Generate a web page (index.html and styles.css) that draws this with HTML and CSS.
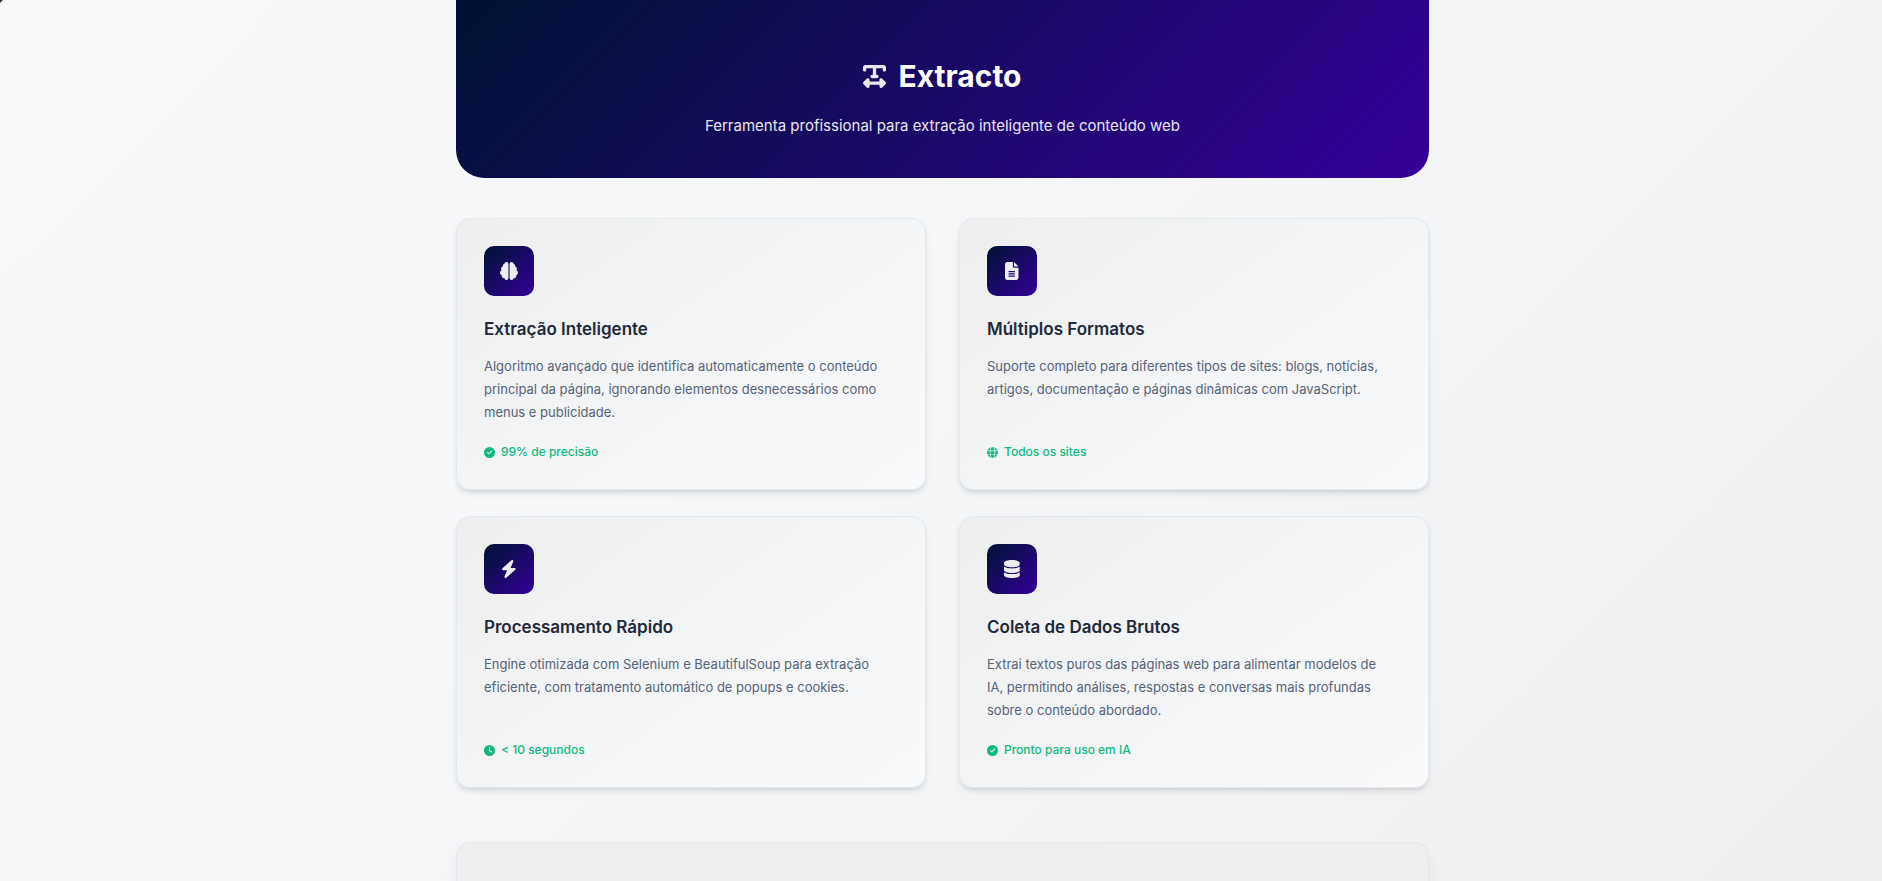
FILE: index.html
```html
<!DOCTYPE html>
<html lang="pt-BR">
<head>
<meta charset="utf-8">
<meta name="viewport" content="width=device-width, initial-scale=1">
<title>Extracto</title>
<link rel="stylesheet" href="styles.css">
</head>
<body>
<div class="page">
  <header class="hero">
    <h1 class="hero-title">
      <svg class="hero-icon" viewBox="0 32 448 448" aria-hidden="true"><path d="M64 128V96H192l0 128H176c-17.700 0-32 14.300-32 32s14.300 32 32 32h96c17.700 0 32-14.300 32-32s-14.300-32-32-32H256l0-128H384v32c0 17.700 14.300 32 32 32s32-14.300 32-32V80c0-26.500-21.500-48-48-48H224 48C21.500 32 0 53.500 0 80v48c0 17.700 14.300 32 32 32s32-14.300 32-32zM9.400 361.400c-12.500 12.500-12.500 32.800 0 45.300l64 64c9.200 9.200 22.900 11.900 34.900 6.900s19.800-16.600 19.800-29.600V416H320v32c0 12.900 7.800 24.600 19.800 29.600s25.700 2.200 34.900-6.900l64-64c12.500-12.500 12.500-32.800 0-45.300l-64-64c-9.200-9.200-22.900-11.900-34.900-6.900s-19.800 16.600-19.800 29.600v32H128V320c0-12.900-7.800-24.600-19.800-29.600s-25.700-2.200-34.900 6.900l-64 64z"/></svg>
      <span>Extracto</span>
    </h1>
    <p class="hero-subtitle">Ferramenta profissional para extração inteligente de conteúdo web</p>
  </header>

  <main class="content">
    <div class="features">
      <article class="card">
        <div class="card-icon"><svg viewBox="0 0 512 512" aria-hidden="true"><path d="M184 0c30.900 0 56 25.100 56 56V456c0 30.900-25.100 56-56 56c-28.900 0-52.700-21.900-55.700-50.100c-5.200 1.400-10.700 2.100-16.300 2.100c-35.300 0-64-28.700-64-64c0-7.400 1.300-14.600 3.600-21.200C21.400 367.400 0 338.200 0 304c0-31.900 18.700-59.500 45.800-72.300C37.100 220.800 32 207 32 192c0-30.700 21.600-56.300 50.400-62.600C80.800 123.900 80 118 80 112c0-29.900 20.600-55.100 48.300-62.100C131.300 21.900 155.100 0 184 0zM328 0c28.900 0 52.600 21.900 55.700 49.900c27.800 7 48.300 32.100 48.300 62.100c0 6-.8 11.900-2.400 17.400c28.800 6.200 50.400 31.900 50.400 62.600c0 15-5.100 28.800-13.800 39.700C493.300 244.500 512 272.100 512 304c0 34.200-21.400 63.400-51.600 74.800c2.300 6.600 3.600 13.800 3.600 21.200c0 35.300-28.700 64-64 64c-5.600 0-11.100-.7-16.300-2.100c-3 28.200-26.800 50.100-55.700 50.100c-30.900 0-56-25.100-56-56V56c0-30.900 25.100-56 56-56z"/></svg></div>
        <h2 class="card-title">Extração Inteligente</h2>
        <p class="card-text">Algoritmo avançado que identifica automaticamente o conteúdo principal da página, ignorando elementos desnecessários como menus e publicidade.</p>
        <p class="card-stat"><svg viewBox="0 0 512 512" aria-hidden="true"><path d="M256 512A256 256 0 1 0 256 0a256 256 0 1 0 0 512zM369 209L241 337c-9.400 9.400-24.600 9.400-33.900 0l-64-64c-9.400-9.400-9.400-24.600 0-33.900s24.600-9.400 33.900 0l47 47L335 175c9.400-9.400 24.600-9.400 33.900 0s9.400 24.600 0 33.900z"/></svg>99% de precisão</p>
      </article>

      <article class="card">
        <div class="card-icon"><svg viewBox="0 0 384 512" aria-hidden="true"><path d="M64 0C28.700 0 0 28.700 0 64V448c0 35.300 28.700 64 64 64H320c35.300 0 64-28.700 64-64V160H256c-17.700 0-32-14.300-32-32V0H64zM256 0V128H384L256 0zM112 256H272c8.800 0 16 7.200 16 16s-7.200 16-16 16H112c-8.800 0-16-7.200-16-16s7.200-16 16-16zm0 64H272c8.800 0 16 7.200 16 16s-7.200 16-16 16H112c-8.800 0-16-7.200-16-16s7.200-16 16-16zm0 64H272c8.800 0 16 7.200 16 16s-7.200 16-16 16H112c-8.800 0-16-7.200-16-16s7.200-16 16-16z"/></svg></div>
        <h2 class="card-title">Múltiplos Formatos</h2>
        <p class="card-text">Suporte completo para diferentes tipos de sites: blogs, notícias, artigos, documentação e páginas dinâmicas com JavaScript.</p>
        <p class="card-stat"><svg viewBox="0 0 512 512" aria-hidden="true"><path d="M352 256c0 22.200-1.200 43.600-3.300 64H163.300c-2.200-20.400-3.300-41.800-3.300-64s1.200-43.600 3.300-64H348.700c2.200 20.400 3.300 41.800 3.300 64zm28.800-64H503.900c5.300 20.500 8.100 41.900 8.100 64s-2.800 43.500-8.100 64H380.800c2.100-20.600 3.200-42 3.200-64s-1.100-43.400-3.200-64zm112.600-32H376.700c-10-63.900-29.800-117.400-55.300-151.600c78.300 20.700 142 77.500 171.900 151.600zm-149.100 0H167.700c6.100-36.400 15.500-68.600 27-94.700c10.500-23.600 22.200-40.700 33.500-51.500C239.400 3.200 248.700 0 256 0s16.600 3.200 27.800 13.800c11.300 10.800 23 27.900 33.500 51.500c11.600 26 20.900 58.200 27 94.700zm-209 0H18.600C48.600 85.900 112.200 29.100 190.600 8.400C165.100 42.600 145.300 96.100 135.300 160zM8.100 192H131.200c-2.100 20.600-3.200 42-3.200 64s1.100 43.400 3.200 64H8.100C2.800 299.500 0 278.100 0 256s2.800-43.500 8.100-64zM194.700 446.600c-11.600-26-20.900-58.200-27-94.600H344.300c-6.100 36.400-15.500 68.600-27 94.600c-10.500 23.600-22.200 40.700-33.500 51.500C272.600 508.800 263.300 512 256 512s-16.600-3.200-27.800-13.800c-11.300-10.800-23-27.900-33.500-51.500zM135.300 352c10 63.900 29.800 117.400 55.300 151.600C112.200 482.900 48.600 426.100 18.600 352H135.300zm358.100 0c-30 74.100-93.600 130.900-171.900 151.600c25.500-34.200 45.200-87.700 55.300-151.600H493.400z"/></svg>Todos os sites</p>
      </article>

      <article class="card">
        <div class="card-icon"><svg viewBox="0 0 448 512" aria-hidden="true"><path d="M349.400 44.600c5.900-13.700 1.500-29.700-10.600-38.500s-28.600-8-39.900 1.800l-256 224c-10 8.800-13.600 22.900-8.900 35.300S50.700 288 64 288H175.500L98.600 467.400c-5.900 13.700-1.500 29.700 10.600 38.500s28.600 8 39.900-1.800l256-224c10-8.800 13.600-22.900 8.900-35.300s-16.600-20.700-30-20.700H272.500L349.400 44.600z"/></svg></div>
        <h2 class="card-title">Processamento Rápido</h2>
        <p class="card-text">Engine otimizada com Selenium e BeautifulSoup para extração eficiente, com tratamento automático de popups e cookies.</p>
        <p class="card-stat"><svg viewBox="0 0 512 512" aria-hidden="true"><path d="M256 0a256 256 0 1 1 0 512A256 256 0 1 1 256 0zM232 120V256c0 8 4 15.500 10.700 20l96 64c11 7.400 25.900 4.400 33.300-6.700s4.400-25.900-6.700-33.300L280 243.200V120c0-13.300-10.700-24-24-24s-24 10.700-24 24z"/></svg>&lt; 10 segundos</p>
      </article>

      <article class="card">
        <div class="card-icon"><svg viewBox="0 0 448 512" aria-hidden="true"><path d="M448 80v48c0 44.200-100.300 80-224 80S0 172.200 0 128V80C0 35.800 100.300 0 224 0S448 35.800 448 80zM393.200 214.700c20.800-7.400 39.900-16.900 54.800-28.600V288c0 44.200-100.300 80-224 80S0 332.200 0 288V186.100c14.900 11.800 34 21.200 54.800 28.600C99.700 230.700 159.500 240 224 240s124.300-9.300 169.200-25.300zM0 346.100c14.900 11.800 34 21.200 54.800 28.600C99.700 390.700 159.500 400 224 400s124.300-9.300 169.200-25.300c20.800-7.400 39.900-16.900 54.800-28.600V432c0 44.200-100.300 80-224 80S0 476.200 0 432V346.100z"/></svg></div>
        <h2 class="card-title">Coleta de Dados Brutos</h2>
        <p class="card-text">Extrai textos puros das páginas web para alimentar modelos de IA, permitindo análises, respostas e conversas mais profundas sobre o conteúdo abordado.</p>
        <p class="card-stat"><svg viewBox="0 0 512 512" aria-hidden="true"><path d="M256 512A256 256 0 1 0 256 0a256 256 0 1 0 0 512zM369 209L241 337c-9.400 9.400-24.600 9.400-33.900 0l-64-64c-9.400-9.400-9.400-24.600 0-33.900s24.600-9.400 33.900 0l47 47L335 175c9.400-9.400 24.600-9.400 33.900 0s9.400 24.600 0 33.900z"/></svg>Pronto para uso em IA</p>
      </article>
    </div>

    <section class="panel"></section>
  </main>
</div>
</body>
</html>
```

FILE: styles.css
```css
* {
  box-sizing: border-box;
  margin: 0;
}

body {
  min-height: 100vh;
  padding-left: 3px;
  background: linear-gradient(135deg, #f8fafc 0%, #f3f4f6 60%, #eeeeee 100%);
  color: #1e293b;
  font-family: Inter, "Liberation Sans", sans-serif;
}

/* dark speck in the window corner */
body::before {
  content: "";
  position: absolute;
  top: 0;
  left: 0;
  width: 3px;
  height: 3px;
  background: #333333;
  clip-path: polygon(0 0, 100% 0, 0 100%);
}

.page {
  display: flex;
  flex-direction: column;
  max-width: 973px;
  min-height: 100vh;
  margin: 0 auto;
}

.hero {
  padding: 54px 24px 40px;
  border-radius: 0 0 28px 28px;
  background: linear-gradient(135deg, #001233 0%, #330099 100%);
  color: #ffffff;
  text-align: center;
}

.hero-title {
  display: flex;
  align-items: center;
  justify-content: center;
  gap: 12px;
  font-size: 30px;
  font-weight: 700;
  line-height: 44px;
}

.hero-icon {
  width: 23px;
  height: 23px;
  fill: #ffffff;
  opacity: 0.9;
}

.hero-subtitle {
  margin-top: 15px;
  font-size: 15px;
  line-height: 25px;
  opacity: 0.9;
}

.content {
  display: flex;
  flex: 1;
  flex-direction: column;
  gap: 54px;
  padding-top: 40px;
}

.features {
  display: grid;
  grid-template-columns: 1fr 1fr;
  gap: 26px 33px;
}

.card {
  display: flex;
  flex-direction: column;
  padding: 27px;
  border: 1px solid #e2e8f0;
  border-radius: 14px;
  background: linear-gradient(145deg, #eeeeee 0%, #f8fafc 100%);
  box-shadow: 0 4px 6px -1px rgba(0, 0, 0, 0.1), 0 2px 4px -2px rgba(0, 0, 0, 0.1);
}

.card-icon {
  display: flex;
  align-items: center;
  justify-content: center;
  width: 50px;
  height: 50px;
  margin-bottom: 20px;
  border-radius: 10px;
  background: linear-gradient(135deg, #001233 0%, #330099 100%);
}

.card-icon svg {
  height: 18px;
  fill: #eeeeee;
}

.card-title {
  margin-bottom: 12px;
  font-size: 17px;
  font-weight: 600;
  line-height: 27px;
}

.card-text {
  margin-bottom: 18px;
  padding-right: 10px;
  color: #566378;
  font-size: 13px;
  line-height: 23px;
}

.card-stat {
  display: flex;
  align-items: center;
  gap: 6px;
  margin-top: auto;
  color: #10b981;
  font-size: 12px;
  font-weight: 500;
  line-height: 20px;
}

.card-stat svg {
  width: 11px;
  height: 11px;
  fill: currentColor;
}

.panel {
  flex: 1;
  border: 1px solid #e2e8f0;
  border-bottom: 0;
  border-radius: 14px 14px 0 0;
  background: #eeeeee;
  box-shadow: 0 10px 15px -3px rgba(0, 0, 0, 0.1);
}
```
